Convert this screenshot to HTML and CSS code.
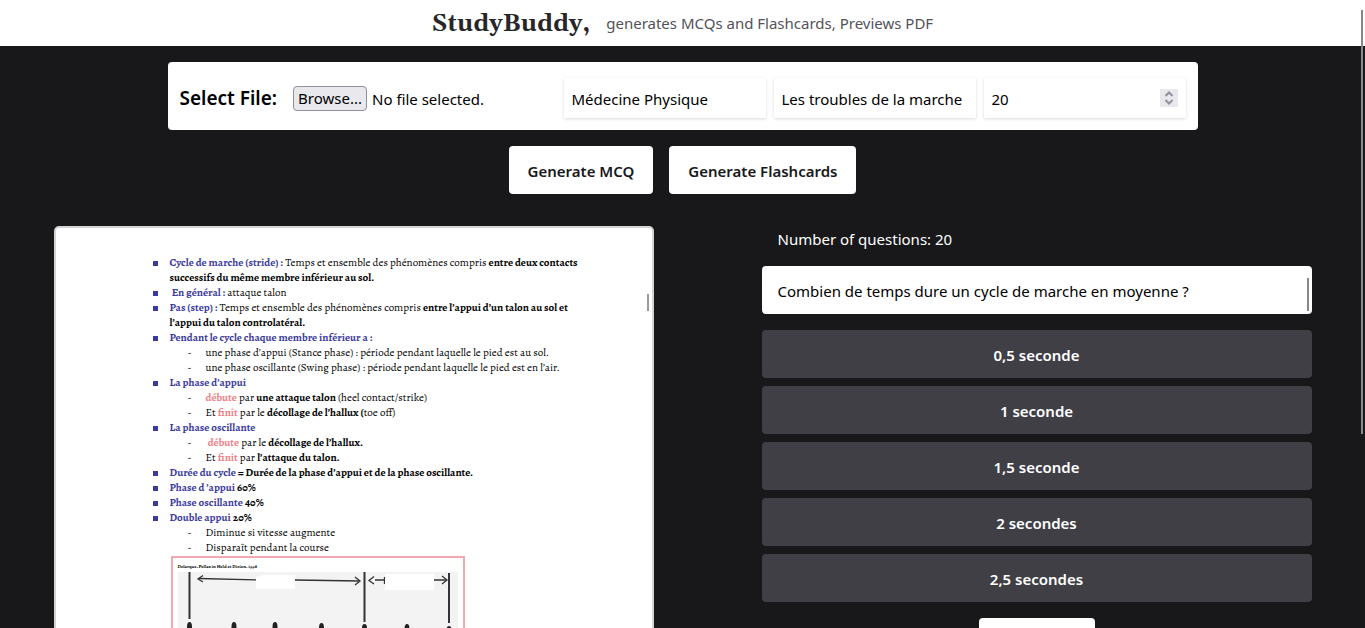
FILE: index.html
```html
<!DOCTYPE html>
<html lang="en">
<head>
<meta charset="utf-8">
<title>StudyBuddy</title>
<link rel="stylesheet" href="styles.css">
</head>
<body>
<header class="site-header">
  <h1 class="brand">StudyBuddy,</h1>
  <p class="tagline">generates MCQs and Flashcards, Previews PDF</p>
</header>
<form class="controls">
  <div class="upload-bar">
    <div class="file-field">
      <span class="file-label" id="file-label">Select File:</span>
      <button class="browse" type="button" aria-labelledby="file-label">Browse...</button>
      <span class="file-status">No file selected.</span>
    </div>
    <div class="fields">
      <input class="field" type="text" name="subject" value="Médecine Physique">
      <input class="field" type="text" name="topic" value="Les troubles de la marche">
      <div class="number-field">
        <input class="field" type="number" name="count" value="20">
        <svg class="stepper" viewBox="0 0 18 18"><path d="M5.500 7 9 3.500 12.500 7M5.500 11 9 14.500 12.500 11"/></svg>
      </div>
    </div>
  </div>
  <div class="actions">
    <button class="action" type="button">Generate MCQ</button>
    <button class="action" type="button">Generate Flashcards</button>
  </div>
</form>
<main class="workspace">
  <article class="pdf">
    <ul class="notes">
      <li><b class="term">Cycle de marche (stride) :</b> Temps et ensemble des phénomènes compris <b>entre deux contacts<br>successifs du même membre inférieur au sol.</b></li>
      <li>&nbsp;<b class="term">En général :</b> attaque talon</li>
      <li><b class="term">Pas (step) :</b> Temps et ensemble des phénomènes compris <b>entre l’appui d’un talon au sol et<br>l’appui du talon controlatéral.</b></li>
      <li><b class="term">Pendant le cycle chaque membre inférieur a :</b>
        <ul class="subnotes">
          <li>une phase d’appui (Stance phase) : période pendant laquelle le pied est au sol.</li>
          <li>une phase oscillante (Swing phase) : période pendant laquelle le pied est en l’air.</li>
        </ul>
      </li>
      <li><b class="term">La phase d’appui</b>
        <ul class="subnotes">
          <li><b class="mark">débute</b> par <b>une attaque talon</b> (heel contact/strike)</li>
          <li>Et <b class="mark">finit</b> par le <b>décollage de l’hallux (</b>toe off)</li>
        </ul>
      </li>
      <li><b class="term">La phase oscillante</b>
        <ul class="subnotes">
          <li>&nbsp;<b class="mark">débute</b> par le <b>décollage de l’hallux.</b></li>
          <li>Et <b class="mark">finit</b> par <b>l’attaque du talon.</b></li>
        </ul>
      </li>
      <li><b class="term">Durée du cycle</b> <b>= Durée de la phase d’appui et de la phase oscillante.</b></li>
      <li><b class="term">Phase d ’appui</b> <b>60%</b></li>
      <li><b class="term">Phase oscillante</b> <b>40%</b></li>
      <li><b class="term">Double appui</b> <b>20%</b>
        <ul class="subnotes">
          <li>Diminue si vitesse augmente</li>
          <li>Disparaît pendant la course</li>
        </ul>
      </li>
    </ul>
    <figure class="figure">
      <figcaption class="credit">Delarque, Pellas in Held et Dizien, 1998</figcaption>
      <svg class="diagram" viewBox="0 0 280 90">
        <rect width="280" height="90" fill="#f3f3f3"/>
        <g fill="none" stroke="#333">
          <path d="M11.500 0V47M186.500 0V50M271 1V51" stroke-width="2"/>
          <path d="M21 6.500 81 8M117 8 182 9M197 8H206M256 8H268" stroke-width="1.300"/>
          <path d="M25 3.500 20 7 25 10M177 5 182 9 177 13M196 4.500 191 8.500 196 12M264 4 269 8 264 12M206.500 5V12" stroke-width="1.300"/>
        </g>
        <path d="M78 5 86 3H117V17H78ZM207 2H256V18H207Z" fill="#fff"/>
        <g fill="#222">
          <ellipse cx="11.500" cy="55" rx="2.500" ry="5"/><ellipse cx="56" cy="55" rx="2.500" ry="5"/><ellipse cx="97" cy="55" rx="2.500" ry="5"/><ellipse cx="143.500" cy="56" rx="2.500" ry="5"/><ellipse cx="186.500" cy="56" rx="2.500" ry="4"/><ellipse cx="229" cy="57" rx="2.500" ry="5"/><ellipse cx="271" cy="58" rx="2.500" ry="4"/>
        </g>
      </svg>
    </figure>
    <div class="pdf-thumb"></div>
  </article>
  <section class="quiz">
    <p class="quiz-count">Number of questions: 20</p>
    <div class="question">Combien de temps dure un cycle de marche en moyenne ?<div class="question-thumb"></div></div>
    <div class="answers">
      <button class="answer" type="button">0,5 seconde</button>
      <button class="answer" type="button">1 seconde</button>
      <button class="answer" type="button">1,5 seconde</button>
      <button class="answer" type="button">2 secondes</button>
      <button class="answer" type="button">2,5 secondes</button>
    </div>
    <button class="next" type="button"></button>
  </section>
</main>
<div class="page-thumb"></div>
</body>
</html>
```

FILE: styles.css
```css
* { box-sizing: border-box; margin: 0; padding: 0; }
body {
  height: 100vh;
  overflow: hidden;
  background: #18181a;
  color: #000;
  font: 15px/24px "Noto Sans", "Open Sans", sans-serif;
}
button, input { font: inherit; color: inherit; border: 0; }
ul { list-style: none; }

.site-header {
  display: flex;
  justify-content: center;
  align-items: center;
  gap: 16px;
  height: 46px;
  background: #fff;
}
.brand {
  padding-top: 2px;
  font: bold 24px/32px Gelasio, "DejaVu Serif", serif;
  color: #27272a;
}
.tagline { color: #52525b; }

.controls {
  display: flex;
  flex-direction: column;
  align-items: center;
  gap: 16px;
  padding: 16px;
}
.upload-bar {
  display: flex;
  justify-content: space-between;
  width: 100%;
  max-width: 1030px;
  padding: 16px 12px 12px;
  border-radius: 4px;
  background: #fff;
}
.file-field { display: flex; align-items: center; height: 40px; }
.file-label { margin-right: 16px; font-size: 19px; font-weight: 600; }
.browse {
  height: 25px;
  padding: 0 4px;
  margin-right: 5px;
  border: 1px solid #8f8f9d;
  border-radius: 4px;
  background: #e9e9ed;
  line-height: 23px;
}
.file-status { padding-top: 2px; }
.fields { display: grid; grid-template-columns: repeat(3, 202px); gap: 8px; }
.field {
  width: 100%;
  height: 40px;
  padding: 2px 8px 0;
  background: #fff;
  box-shadow: 0 1px 3px rgba(0, 0, 0, .15);
  appearance: textfield;
}
.number-field { position: relative; }
.stepper {
  position: absolute;
  top: 11px;
  right: 8px;
  width: 18px;
  height: 18px;
  background: #e9e9ed;
  fill: none;
  stroke: #8f8f9d;
  stroke-width: 2;
}
.actions { display: flex; gap: 16px; }
.action {
  height: 48px;
  padding: 2px 19px 0;
  border-radius: 4px;
  background: #fff;
  color: #18181b;
  font-weight: 600;
}

.workspace {
  display: flex;
  justify-content: center;
  align-items: flex-start;
  gap: 108px;
  padding-top: 16px;
}
.pdf {
  position: relative;
  width: 600px;
  padding: 27px 60px 40px 98px;
  border: 2px solid #d4d4d4;
  border-radius: 5px;
  background: #fff;
  font: 11px/15px Alegreya, "Liberation Serif", serif;
}
.notes > li { position: relative; padding-left: 16px; white-space: nowrap; }
.notes > li::before {
  content: "";
  position: absolute;
  top: 6px;
  left: -1px;
  width: 5px;
  height: 5px;
  background: #3b3b9e;
}
.subnotes li { padding-left: 36px; }
.subnotes li::before { content: "-"; float: left; width: 18px; margin-left: -18px; }
.term { color: #3b3b9e; }
.mark { background: none; color: #f07f89; }
.figure {
  width: 294px;
  margin: 1px 0 0 17px;
  padding: 4px 4px 4px 5px;
  border: 2px solid #f2aab0;
}
.credit { font-size: 5px; line-height: 10px; font-weight: bold; }
.diagram { display: block; width: 280px; height: 90px; }
.pdf-thumb {
  position: absolute;
  top: 66px;
  right: 3px;
  width: 2px;
  height: 17px;
  background: #999;
}

.quiz { display: flex; flex-direction: column; width: 550px; }
.quiz-count { padding: 1px 16px 15px; color: #fff; }
.question {
  position: relative;
  padding: 13px 16px 11px;
  margin-bottom: 16px;
  border-radius: 4px;
  background: #fff;
}
.question-thumb {
  position: absolute;
  top: 12px;
  right: 3px;
  width: 2px;
  height: 33px;
  background: #888;
}
.answers { display: grid; gap: 8px; }
.answer {
  height: 48px;
  padding-top: 2px;
  border-radius: 4px;
  background: #3f3f45;
  color: #fff;
  font-weight: 600;
}
.next {
  align-self: center;
  width: 116px;
  height: 48px;
  margin-top: 16px;
  border-radius: 4px;
  background: #fff;
}
.page-thumb {
  position: absolute;
  top: 10px;
  right: 2px;
  width: 2px;
  height: 424px;
  background: #888;
}
```
